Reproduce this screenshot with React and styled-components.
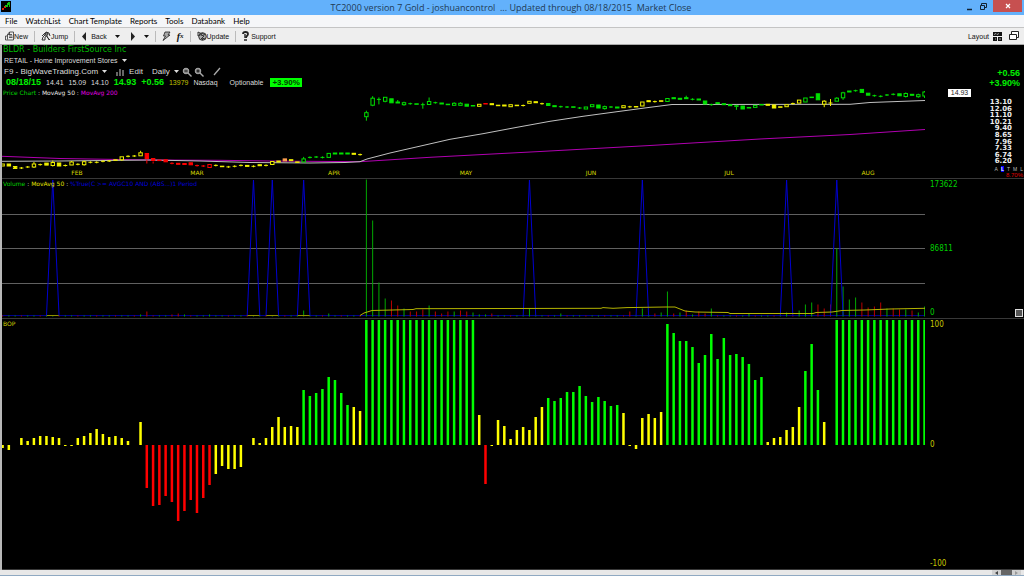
import React from "react"
import styled, { createGlobalStyle } from "styled-components"

const FIRST_X = 2.6
const STEP = 6.272
const ZERO_Y = 445

const menuItems = ["File", "WatchList", "Chart Template", "Reports", "Tools", "Databank", "Help"]

const months = [
  { name: "FEB", x: 77 },
  { name: "MAR", x: 197 },
  { name: "APR", x: 334 },
  { name: "MAY", x: 466 },
  { name: "JUN", x: 591 },
  { name: "JUL", x: 729 },
  { name: "AUG", x: 868 },
]

const priceScale = ["13.10", "12.06", "11.10", "10.21", "9.40", "8.65", "7.96", "7.33", "6.74", "6.20"]

// [middle, kind + colour, body height, wick up, wick down]
// kinds: h hollow, s solid, c cross
const candles = [
  [165, "hy", 2], [165.5, "sy", 3], [168, "sy", 3], [168, "cy"], [167, "cy"], [165.5, "hy", 3, 2, 1],
  [164.6, "cy"], [164.6, "sy", 3], [164, "hy", 3, 2, 1], [165, "sy", 4], [165.5, "cy"], [163.5, "hy", 3, 1],
  [164.3, "cy"], [163.2, "hy", 3, 1, 1], [162.3, "cy"], [162.3, "cy"], [161.3, "cy"], [161, "cy"],
  [160.3, "sy", 1], [158.3, "hy", 3, 0, 1], [156.3, "cy"], [156, "cy"], [154.3, "hy", 3, 2, 0],
  [156.5, "sr", 6, 0, 4], [160, "sr", 3, 0, 2], [160.6, "sr", 1], [161.3, "sr", 3], [163.3, "cr"],
  [164.3, "sr", 2], [164.5, "sr", 2], [164.3, "sr", 3], [165.6, "cr"], [166, "cr"], [166, "hr", 3],
  [165.4, "cy"], [166.7, "sy", 1], [166.9, "cy"], [166.3, "cy"], [165.4, "cy"], [166.4, "sy", 2],
  [166.3, "cy"], [165.7, "sy", 2], [165.4, "cy"], [163, "hy", 3], [162, "sy", 2], [160.4, "so", 3],
  [160.7, "sy", 2], [162.4, "sy", 1], [160.4, "hg", 3, 2, 0], [157.4, "cg"], [157, "cg"], [157.4, "cg"],
  [155.4, "hg", 4], [154, "sg", 2], [154, "sg", 2], [154, "sg", 2], [154.3, "sy", 2], [154.6, "cy"],
  [114.7, "hg", 4, 2, 4], [101.7, "hg", 7, 2, 1], [99.4, "cg", 1, 1, 4], [99.3, "hg", 4, 0, 1],
  [101.3, "sg", 5], [103, "sg", 2, 2, 0], [103.7, "hg", 2, 1, 1], [103.7, "cg"], [104.3, "sg", 1],
  [104.7, "cg", 1, 1, 3], [103, "hg", 3, 4, 0], [102.7, "cg"], [104, "sg", 2], [104.7, "sg", 1],
  [104.3, "hg", 2, 1, 0], [104.3, "hg", 2, 1, 0], [105.7, "sg", 3], [106, "sg", 1], [105.3, "hy", 2],
  [104, "sr", 1], [104.7, "sy", 2], [105.7, "sy", 1], [106, "sy", 2], [105.7, "hy", 2], [105.7, "sy", 1],
  [105.5, "cy"], [102.3, "hy", 2], [102.7, "sy", 2], [103.7, "cy"], [105, "sg", 3], [106.7, "sg", 2],
  [106.7, "cg"], [107, "cg"], [107.3, "sg", 1], [108, "cg"], [108, "hg", 2], [105.7, "hg", 2],
  [107, "sg", 4], [107.6, "hg", 2, 1, 1], [107, "cg"], [108, "sg", 2], [106.7, "hy", 2],
  [106.8, "cy"], [107, "sy", 1], [104, "hy", 4], [101.7, "sy", 2], [101.6, "cy"], [101.3, "sy", 1],
  [100, "hg", 3], [98.7, "sg", 2], [99.3, "sg", 2], [98.7, "sg", 2, 2, 0], [99.3, "cg"], [100, "sg", 2],
  [103, "sg", 4], [104.7, "cg"], [103.7, "sg", 2], [104.7, "sg", 2], [105.7, "sg", 2],
  [106.3, "sg", 1, 1, 3], [108, "sg", 4], [108, "sg", 1], [106.4, "hg", 2], [105, "sg", 1],
  [105.3, "sy", 2], [107, "sy", 4], [107.3, "sy", 1], [105.7, "hy", 2], [103.6, "cy"], [101.6, "hy", 3],
  [100, "hg", 4], [97.6, "sg", 1], [97.3, "sg", 7], [102.7, "hy", 3, 1, 3], [103, "cy", 1, 3, 2],
  [99.7, "hg", 3, 1, 0], [95.3, "hg", 5, 1, 2], [92, "sg", 2], [90.7, "cg"], [91.4, "sg", 4],
  [94.7, "sg", 3], [95.7, "cg"], [96.3, "cg"], [95, "cg"], [94.3, "cg"], [95.3, "sg", 3],
  [95, "hg", 3, 1, 1], [95.3, "sg", 2], [95.7, "hg", 2, 1, 1], [94, "hg", 4, 1, 2],
]

const candleColors = { y: "#f0f000", r: "#ff0000", g: "#00e000", o: "#ffa050" }

const full = count => Array(count).fill(125)

const bop = [
  -3, -5, 0, 7, 4, 7, 9, 9, 8, 7, -1, -1, 7, 9, 12, 16, 11, 8, 9, 7, 4, 0, 23,
  -43, -61, -60, -51, -57, -76, -66, -55, -68, -53, -40, -29, -21, -24, -24, -22, 0,
  7, 2, 7, 18, 28, 18, 19, 18, 55, 49, 52, 56, 68, 65, 52, 40, 38, 34,
  ...full(18),
  30, -39, -1, 25, 19, 6, 15, 18, 15, 28, 38, 47, 44, 47, 53, 53, 59, 49, 43, 48,
  44, 39, 40, 32, -1, -4, 27, 31, 27, 33, 121, 112, 104, 104, 98, 82, 90, 111, 86,
  107, 90, 91, 88, 81, 65, 68, 3, 7, 8, 15, 18, 38, 74, 101, 55, 23, 0,
  ...full(15),
]

// bar index: [height, colour]
const volume = {
  22: [2, "g"], 23: [5, "r"], 27: [2, "r"], 28: [3, "r"], 29: [2, "g"], 33: [2, "g"], 48: [6, "g"],
  52: [3, "g"], 58: [137, "g"], 59: [96, "g"], 60: [34, "g"], 61: [18, "g"], 62: [16, "r"],
  63: [11, "r"], 64: [8, "g"], 65: [5, "r"], 66: [5, "r"], 67: [7, "r"], 68: [11, "g"], 69: [5, "r"],
  70: [3, "r"], 71: [5, "r"], 72: [5, "g"], 73: [6, "r"], 74: [5, "r"], 75: [4, "g"], 76: [2, "g"],
  77: [2, "g"], 78: [3, "r"], 84: [8, "g"], 89: [3, "g"], 100: [5, "r"], 102: [8, "g"], 104: [3, "r"],
  105: [4, "g"], 106: [25, "g"], 107: [3, "r"], 108: [4, "g"], 109: [6, "r"], 110: [2, "g"],
  111: [5, "r"], 112: [3, "r"], 113: [8, "g"], 119: [3, "g"], 125: [4, "g"], 127: [6, "g"],
  128: [12, "g"], 129: [14, "g"], 130: [12, "r"], 131: [8, "r"], 132: [12, "r"], 133: [68, "g"],
  134: [30, "g"], 135: [17, "g"], 136: [19, "g"], 137: [14, "r"], 138: [9, "r"], 139: [10, "r"],
  140: [14, "r"], 141: [8, "g"], 142: [8, "r"], 143: [7, "r"], 144: [7, "g"], 145: [6, "r"],
  146: [4, "g"], 147: [10, "g"],
}

const spikes = [8, 40, 43, 48, 84, 102, 125, 133]

const barX = index => FIRST_X + index * STEP

const bopColor = value => {
  if (value >= 39) return "#00ff00"
  if (value <= -39) return "#ff0000"
  return "#ffff00"
}

const Candle = ({ index, data }) => {
  const [y, type, height = 1, up = 0, down = 0] = data
  const [kind, tone] = type
  const color = candleColors[tone]
  const x = barX(index)
  if (kind === "c") {
    return (
      <path
        d={`M${x - 2} ${y}h4M${x} ${y - 1 - up}V${y + 1 + down}`}
        stroke={color}
        strokeWidth="1"
      />
    )
  }
  const half = height / 2
  return (
    <g stroke={color} strokeWidth="1" fill={kind === "s" ? color : "#000"}>
      {up > 0 && <path d={`M${x} ${y - half}v${-up}`} />}
      {down > 0 && <path d={`M${x} ${y + half}v${down}`} />}
      <rect x={x - 1.7} y={y - half} width="3.4" height={kind === "s" ? Math.max(height - 1, 0.5) : height} />
    </g>
  )
}

const PriceChart = () => (
  <Plot viewBox="2 45 923 133" preserveAspectRatio="none" role="img" aria-label="Price chart">
    <polyline
      points="2,156.3 60,158.5 150,160 220,160.3 270,161 360,161.7 430,157.3 540,151.5 650,145.5 760,139 850,134.5 925,129.5"
      stroke="#b000b0"
      fill="none"
    />
    <polyline
      points="2,161.3 60,161 150,160 200,161 250,162.5 310,163 345,162.5 360,161.7 367,159 390,153 450,139.3 483,133.7 517,127.3 550,121.3 583,116.3 617,111.7 650,107.3 672,104.5 850,104.3 870,102.5 925,100.5"
      stroke="#c0c0c0"
      fill="none"
    />
    {candles.map((candle, index) => (
      <Candle key={index} index={index} data={candle} />
    ))}
  </Plot>
)

const VolumeChart = () => (
  <Plot viewBox="2 179 923 139" preserveAspectRatio="none" role="img" aria-label="Volume chart">
    {[214.5, 248.5, 283.5].map(y => (
      <path key={y} d={`M2 ${y}H925`} stroke="#606060" />
    ))}
    <path d="M2 315.5H925" stroke="#000090" />
    {bop.map((value, index) => {
      const [height, tone] = volume[index] || [1, index % 3 ? "g" : "r"]
      return (
        <rect
          key={index}
          x={barX(index) - 0.5}
          y={316.5 - height}
          width="1"
          height={height}
          fill={tone === "g" ? "#00a800" : "#b80000"}
        />
      )
    })}
    {spikes.map(index => (
      <React.Fragment key={index}>
        <polyline
          points={`${barX(index) - STEP},315.5 ${barX(index)},180 ${barX(index) + STEP},315.5`}
          stroke="#0000d0"
          fill="none"
        />
        {index < 58 && <path d={`M${barX(index) - 6} 315.5h12`} stroke="#909000" />}
      </React.Fragment>
    ))}
    <polyline
      points="360,315.5 364,313 372,310.5 413,309.5 416,308.7 601,308.3 603,307.6 613,308.3 627,307.6 665,307 675,307 685,311 695,312 728,312.5 730,313.5 813,313.5 816,312.5 832,312 842,310.5 865,310 890,309 925,308.3"
      stroke="#b4b400"
      fill="none"
    />
  </Plot>
)

const BopChart = () => (
  <Plot viewBox="2 319 923 250" preserveAspectRatio="none" role="img" aria-label="BOP chart">
    {bop.map((value, index) => (
      <rect
        key={index}
        x={barX(index) - 1.3}
        y={value > 0 ? ZERO_Y - value : ZERO_Y}
        width="2.5"
        height={Math.abs(value)}
        fill={bopColor(value)}
      />
    ))}
  </Plot>
)

const AppLogo = () => (
  <svg width="12" height="12" viewBox="0 0 12 12" aria-hidden="true">
    <rect x="1" y="1" width="10" height="11" fill="#000" />
    <path d="M2 10V8h2V6h2v2H4v2z" fill="#e02010" />
    <path d="M5 7V5h2V3h1V2h2v5H9V5H8v2z" fill="#10c010" />
  </svg>
)

const NewIcon = () => (
  <svg width="9" height="10" viewBox="0 0 9 10" fill="none" stroke="#333" strokeWidth=".8" aria-hidden="true">
    <path d="M2.500 3.500l2-2.500h4v8h-8v-4h2M4.500 1v2.500h-2v5M4 5h3.500M4 6.500h3.500M4 3.500h3" />
  </svg>
)

const JumpIcon = () => (
  <svg width="10" height="10" viewBox="0 0 10 10" fill="none" stroke="#333" strokeWidth="1" aria-hidden="true">
    <path d="M1 9l1-3 2-2 1-3 3 1 1 3M1 5l3-3M4 9V6l2-1 2 4M6 6l3 3M1 9h3" />
    <circle cx="5.500" cy="3" r="1.500" fill="#777" />
  </svg>
)

const Arrow = ({ left }) => (
  <svg width="6" height="9" viewBox="0 0 6 9" fill="#222" aria-hidden="true">
    <path d={left ? "M5 0v9L1 4.500z" : "M1 0v9l4-4.500z"} />
  </svg>
)

const Caret = () => (
  <svg width="5" height="3" viewBox="0 0 5 3" fill="currentColor" aria-hidden="true">
    <path d="M0 0h5L2.500 3z" />
  </svg>
)

const BoltIcon = () => (
  <svg width="9" height="10" viewBox="0 0 9 10" fill="#aaa" stroke="#222" strokeWidth=".8" aria-hidden="true">
    <path d="M3 1h5L6 4h2L1 9.500 3.500 5H1.500z" />
  </svg>
)

const GlobeIcon = () => (
  <svg width="10" height="10" viewBox="0 0 10 10" fill="none" stroke="#333" strokeWidth="1" aria-hidden="true">
    <circle cx="5.500" cy="5.500" r="3.800" fill="#aaa" />
    <path d="M1 1v4l4-2zM4 4l3 1-2 2 3 1M5 2l3 2M4 7l2 2" />
  </svg>
)

const SupportIcon = () => (
  <svg width="7" height="10" viewBox="0 0 7 10" fill="none" stroke="#222" aria-hidden="true">
    <path d="M1 3a2.500 2 0 0 1 5 0c0 2-2 1.500-2 4" strokeWidth="1.800" />
    <path d="M3 3v4M2 9h3" strokeWidth="1.400" />
  </svg>
)

const ZoomIcon = ({ sign }) => (
  <svg width="10" height="10" viewBox="0 0 10 10" fill="#888" stroke="#aaa" aria-hidden="true">
    <circle cx="4" cy="4" r="2.800" />
    <path d="M6 6l3.500 3.500" strokeWidth="1.400" />
    <path d={sign === "+" ? "M2.500 4h3M4 2.500v3" : "M2.500 4h3"} stroke="#111" />
  </svg>
)

const Separator = () => <Divider aria-hidden="true" />

const App = () => {
  return (
    <Window>
      <GlobalStyle />
      <TitleBar>
        <AppLogo />
        <Title>TC2000 version 7 Gold - joshuancontrol&nbsp; ... Updated through 08/18/2015&nbsp; Market Close</Title>
        <WindowButtons>
          <WindowButton aria-label="Minimize">
            <svg width="7" height="9" viewBox="0 0 7 9"><path d="M1 7.500h5" stroke="#123" strokeWidth="1.500" /></svg>
          </WindowButton>
          <WindowButton aria-label="Restore">
            <svg width="8" height="9" viewBox="0 0 8 9" fill="none" stroke="#123">
              <path d="M1.500 3.500h4v4h-4zM2.500 3V1.500h5v4H6" />
            </svg>
          </WindowButton>
          <WindowButton aria-label="Close" $close>
            <svg width="6" height="6" viewBox="0 0 6 6"><path d="M1 1l4 4M5 1L1 5" stroke="#fff" strokeWidth="1.200" /></svg>
          </WindowButton>
        </WindowButtons>
      </TitleBar>

      <MenuBar>
        {menuItems.map(item => (
          <MenuButton key={item}>{item}</MenuButton>
        ))}
      </MenuBar>

      <Toolbar>
        <ToolGroup>
          <ToolButton><NewIcon />New</ToolButton>
          <Separator />
          <ToolButton><JumpIcon />Jump</ToolButton>
          <Separator />
          <ToolButton $gap={4}><Arrow left />Back</ToolButton>
          <ToolButton $pad={2} aria-label="Back history"><Caret /></ToolButton>
          <ToolButton $pad={2} aria-label="Forward"><Arrow /></ToolButton>
          <ToolButton aria-label="Forward history"><Caret /></ToolButton>
          <Separator />
          <ToolButton aria-label="Alerts"><BoltIcon /></ToolButton>
          <Formula aria-label="Formulas">f<sub>x</sub></Formula>
          <Separator />
          <ToolButton><GlobeIcon />Update</ToolButton>
          <Separator />
          <ToolButton $gap={2}><SupportIcon />Support</ToolButton>
        </ToolGroup>
        <ToolGroup>
          <ToolButton $gap={4}>
            Layout
            <svg width="10" height="9" viewBox="0 0 10 9" fill="#111" aria-hidden="true">
              <path d="M0 0h9v4H0zM0 5h4v4H0zM5 5h4v4H5z" />
              <path d="M1 2.500l2-1 1 1 2-1M2 7h1M6 7h2" stroke="#ddd" strokeWidth=".7" fill="none" />
            </svg>
          </ToolButton>
          <ToolButton aria-label="Windows">
            <svg width="10" height="10" viewBox="0 0 10 10" fill="#fff" stroke="#222">
              <path d="M2.500 3V.5h7v6h-2" />
              <path d="M.5 3.500h7v5h-7z" />
            </svg>
          </ToolButton>
        </ToolGroup>
      </Toolbar>

      <Charts>
        <Panel $height="134px">
          <PlotArea>
            <PriceChart />
            <Header>
              <Symbol>BLDR - Builders FirstSource Inc</Symbol>
              <HeaderRow>
                <Picker $small>RETAIL - Home Improvement Stores<Caret /></Picker>
              </HeaderRow>
              <HeaderRow $gap={9}>
                <Picker>F9 - BigWaveTrading.Com<Caret /></Picker>
                <Picker>
                  <svg width="9" height="8" viewBox="0 0 9 8" fill="#666" aria-hidden="true">
                    <path d="M0 4h2v4H0zM3 1h2v7H3zM6 2h2v6H6z" />
                  </svg>
                  Edit
                </Picker>
                <Picker>Daily<Caret /></Picker>
                <Tools>
                  <Picker aria-label="Zoom out"><ZoomIcon sign="-" /></Picker>
                  <Picker aria-label="Zoom in"><ZoomIcon sign="+" /></Picker>
                </Tools>
                <Picker aria-label="Draw line">
                  <svg width="8" height="9" viewBox="0 0 8 9"><path d="M1 8l6-7" stroke="#aaa" strokeWidth="1.300" /></svg>
                </Picker>
              </HeaderRow>
              <Quote>
                <Up>08/18/15</Up>
                <span>14.41</span>
                <span>15.09</span>
                <span>14.10</span>
                <Up>14.93</Up>
                <Up>+0.56</Up>
                <Count>13979</Count>
                <span>Nasdaq</span>
                <Optionable>Optionable</Optionable>
                <Badge>+3.90%</Badge>
              </Quote>
              <Legend>
                <Tone $color="#00d800">Price Chart</Tone> : <Tone $color="#e8e8e8">MovAvg 50</Tone> :{" "}
                <Tone $color="#e000e0">MovAvg 200</Tone>
              </Legend>
            </Header>
            {months.map(month => (
              <Month key={month.name} style={{ left: `${((month.x - 2) / 923) * 100}%` }}>
                {month.name}
              </Month>
            ))}
          </PlotArea>
          <PriceAxis>
            <Change>+0.56</Change>
            <Change>+3.90%</Change>
            <LastPrice>14.93</LastPrice>
            <Scale>
              {priceScale.map(price => (
                <span key={price}>{price}</span>
              ))}
            </Scale>
            <Modes>
              <span>A</span>
              <b>L</b>
              <span>T</span>
              <span>M</span>
              <span>L</span>
            </Modes>
            <Percent>8.70%</Percent>
          </PriceAxis>
        </Panel>

        <Panel $height="140px">
          <PlotArea>
            <VolumeChart />
            <Legend>
              <Tone $color="#00d000">Volume</Tone> : <Tone $color="#e0e000">MovAvg 50</Tone> :{" "}
              <Tone $color="#0000d8">%True(C &gt;= AVGC10 AND (ABS...)1 Period</Tone>
            </Legend>
          </PlotArea>
          <Axis $color="#00d000">
            <span>173622</span>
            <span>86811</span>
            <span>0</span>
            <PaneHandle aria-label="Resize pane" />
          </Axis>
        </Panel>

        <Panel>
          <PlotArea>
            <BopChart />
            <Legend>
              <Tone $color="#d0d000">BOP</Tone>
            </Legend>
          </PlotArea>
          <Axis $color="#c8c800">
            <span>100</span>
            <span>0</span>
            <span>-100</span>
          </Axis>
        </Panel>
      </Charts>

      <ScrollBar>
        <ScrollButton aria-label="Scroll left">
          <svg width="3" height="4" viewBox="0 0 3 4"><path d="M3 0v4L0 2z" fill="#444" /></svg>
        </ScrollButton>
        <Thumb />
        <ScrollButton aria-label="Scroll right">
          <svg width="3" height="4" viewBox="0 0 3 4"><path d="M0 0v4l3-2z" fill="#999" /></svg>
        </ScrollButton>
      </ScrollBar>
    </Window>
  )
}

export default App

const GlobalStyle = createGlobalStyle`
  * {
    box-sizing: border-box;
  }
  body {
    margin: 0;
    background: #000;
    font-family: "Liberation Sans", sans-serif;
  }
  button {
    display: flex;
    align-items: center;
    padding: 0;
    border: 0;
    background: none;
    color: inherit;
    font: inherit;
    white-space: nowrap;
  }
`

const Window = styled.div`
  display: flex;
  flex-direction: column;
  min-height: 100vh;
`

const TitleBar = styled.header`
  display: grid;
  grid-template-columns: 1fr auto 1fr;
  height: 15px;
  padding: 0 2px 0 0;
  background: #63b1fb;
`

const Title = styled.h1`
  margin: 0;
  color: #1f3a54;
  font: 9px/15px "Open Sans", sans-serif;
`

const WindowButtons = styled.div`
  display: flex;
  justify-content: flex-end;
  gap: 6px;
  height: 12px;
`

const WindowButton = styled.button`
  justify-content: center;
  width: ${props => (props.$close ? "29px" : "8px")};
  background: ${props => (props.$close ? "#c75050" : "none")};
`

const MenuBar = styled.nav`
  display: flex;
  gap: 8px;
  height: 13px;
  padding: 0 5px;
  background: #f5f6f8;
  border-bottom: 1px solid #c4c4c4;
`

const MenuButton = styled.button`
  color: #000;
  font: 8px/12px Lato, sans-serif !important;
`

const Toolbar = styled.div`
  display: flex;
  justify-content: space-between;
  height: 17px;
  padding: 0 5px;
  background: #eeeeee;
  border-bottom: 1px solid #aaa;
  color: #111;
  font-size: 7px;
`

const ToolGroup = styled.div`
  display: flex;
  align-items: center;
  gap: 6px;
`

const ToolButton = styled.button`
  gap: ${props => props.$gap || 0}px;
  padding: 0 ${props => props.$pad || 0}px;
`

const Formula = styled.button`
  font: italic bold 10px "Liberation Serif", serif !important;
  sub {
    font-size: 7px;
  }
`

const Divider = styled.span`
  width: 1px;
  height: 11px;
  background: #bbb;
`

const Charts = styled.main`
  display: flex;
  flex: 1;
  flex-direction: column;
  border-left: 2px solid #b8b8b8;
  background: #000;
`

const Panel = styled.section`
  display: grid;
  grid-template-columns: 1fr 99px;
  flex: ${props => (props.$height ? "none" : "1")};
  height: ${props => props.$height || "auto"};
  border-bottom: 1px solid #383838;
`

const PlotArea = styled.div`
  display: grid;
  position: relative;
  > * {
    grid-area: 1 / 1;
  }
`

const Plot = styled.svg`
  display: block;
  width: 100%;
  height: 100%;
  min-height: 0;
`

const Header = styled.div`
  display: flex;
  flex-direction: column;
  align-self: start;
  z-index: 1;
  color: #ddd;
  font-size: 8px;
`

const Symbol = styled.h2`
  margin: 0;
  padding-left: 1px;
  color: #00b800;
  font: 8px/10px "DejaVu Sans", sans-serif;
`

const HeaderRow = styled.div`
  display: flex;
  align-items: center;
  gap: ${props => props.$gap || 0}px;
  height: 11px;
  padding-left: 2px;
`

const Picker = styled.button`
  gap: 4px;
  font-size: ${props => (props.$small ? "7px" : "8px")} !important;
`

const Tools = styled.div`
  display: flex;
  gap: 2px;
  margin-left: -6px;
`

const Quote = styled.div`
  display: flex;
  align-items: center;
  gap: 5px;
  height: 11px;
  padding-left: 4px;
  font-size: 7px;
`

const Up = styled.strong`
  color: #00f000;
  font-size: 9px;
  line-height: 11px;
`

const Count = styled.span`
  color: #c0c000;
`

const Optionable = styled.span`
  margin-left: 7px;
`

const Badge = styled.strong`
  margin-left: 2px;
  padding: 0 2px;
  background: #00ff00;
  color: #004000;
  font-size: 8px;
  line-height: 9px;
`

const Legend = styled.div`
  z-index: 1;
  align-self: start;
  padding-left: 1px;
  color: #ccc;
  font: 6px/9px "DejaVu Sans", sans-serif;
`

const Tone = styled.span`
  color: ${props => props.$color};
`

const Month = styled.span`
  position: absolute;
  bottom: 1px;
  transform: translateX(-50%);
  color: #d8d800;
  font: 6px/8px "DejaVu Sans", sans-serif;
`

const PriceAxis = styled.div`
  display: flex;
  flex-direction: column;
  align-items: flex-end;
  padding: 23px 1px 0 0;
`

const Change = styled.strong`
  margin-right: 3px;
  color: #00f000;
  font-size: 9px;
  line-height: 10px;
`

const LastPrice = styled.span`
  align-self: flex-start;
  width: 23px;
  margin: 1px 0 2px 23px;
  background: #fff;
  color: #222;
  font-size: 7px;
  line-height: 8px;
  text-align: center;
`

const Scale = styled.div`
  display: grid;
  grid-auto-rows: 1fr;
  height: 66px;
  margin-right: 11px;
  color: #eee;
  font: bold 7px/6px "DejaVu Sans", sans-serif;
  text-align: right;
`

const Modes = styled.div`
  display: flex;
  gap: 3px;
  margin-top: 1px;
  color: #bbb;
  font-size: 5px;
  line-height: 6px;
  b {
    background: #0000ff;
    color: #fff;
  }
`

const Percent = styled.span`
  color: #e00000;
  font-size: 6px;
  line-height: 6px;
`

const Axis = styled.div`
  display: flex;
  position: relative;
  flex-direction: column;
  justify-content: space-between;
  padding-left: 5px;
  color: ${props => props.$color};
  font: 8px/11px "DejaVu Sans Condensed", "DejaVu Sans", sans-serif;
`

const PaneHandle = styled.button`
  position: absolute;
  right: 1px;
  bottom: 1px;
  width: 8px;
  height: 8px;
  border: 1px solid #ddd !important;
  background: #555 !important;
`

const ScrollBar = styled.footer`
  display: flex;
  justify-content: flex-end;
  height: 6px;
  padding-right: 3px;
  background: #e8e8e8;
  border-bottom: 1px solid #8fa9c2;
`

const ScrollButton = styled.button`
  justify-content: center;
  width: 9px;
  background: #d0d0d0;
`

const Thumb = styled.span`
  width: 11px;
  background: #666;
`
